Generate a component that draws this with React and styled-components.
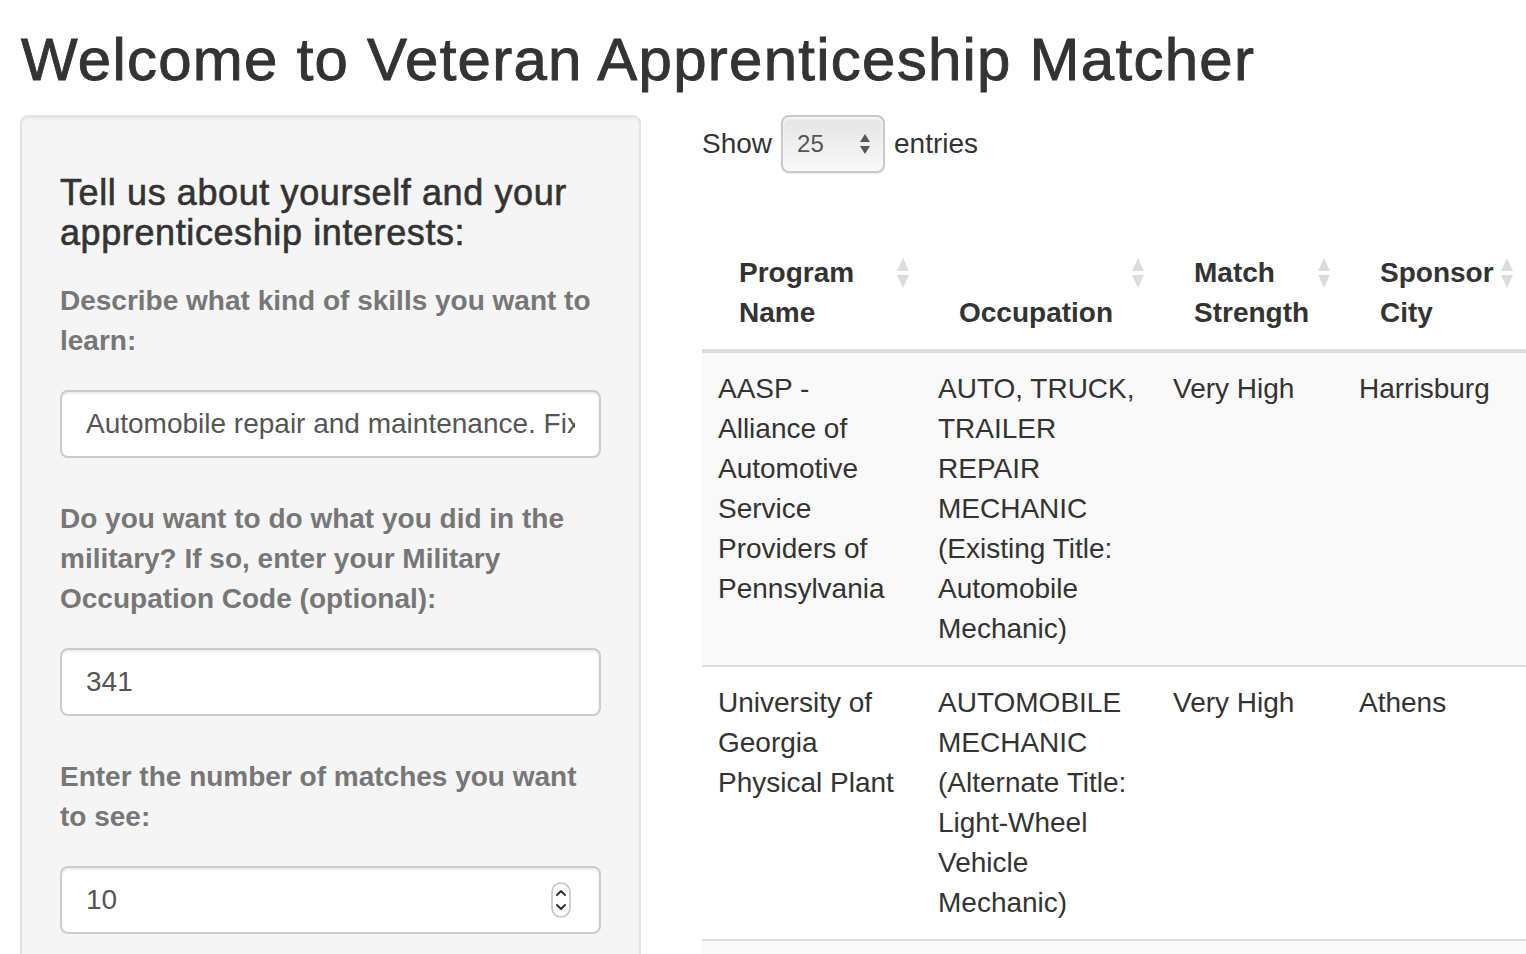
import React from "react";
import styled, { createGlobalStyle } from "styled-components";

const GlobalStyle = createGlobalStyle`
  html, body {
    margin: 0;
    padding: 0;
    background: #fff;
    overflow: hidden;
  }
  body {
    font-family: "Liberation Sans", Arial, Helvetica, sans-serif;
    color: #333;
  }
  * {
    box-sizing: border-box;
  }
`;

const programs = [
  {
    name: "AASP - Alliance of Automotive Service Providers of Pennsylvania",
    occupation: "AUTO, TRUCK, TRAILER REPAIR MECHANIC (Existing Title: Automobile Mechanic)",
    strength: "Very High",
    city: "Harrisburg",
  },
  {
    name: "University of Georgia Physical Plant",
    occupation: "AUTOMOBILE MECHANIC (Alternate Title: Light-Wheel Vehicle Mechanic)",
    strength: "Very High",
    city: "Athens",
  },
];

const columns = [
  { title: "Program Name", width: 220 },
  { title: "Occupation", width: 235 },
  { title: "Match Strength", width: 186 },
  { title: "Sponsor City", width: 183 },
];

function SortIcon() {
  return (
    <SortMark width="14" height="32" viewBox="0 0 14 32">
      <path d="M7 1 L13 14 L1 14 Z" fill="#dcdcdc" />
      <path d="M7 31 L13 18 L1 18 Z" fill="#dcdcdc" />
    </SortMark>
  );
}

function SpinIcon() {
  return (
    <Spinner width="20" height="36" viewBox="0 0 20 36">
      <rect x="1" y="1" width="18" height="34" rx="9" fill="#fff" stroke="#c4c4c4" strokeWidth="1.5" />
      <path d="M6 13 L10 9 L14 13" fill="none" stroke="#333" strokeWidth="2" strokeLinecap="round" strokeLinejoin="round" />
      <path d="M6 23 L10 27 L14 23" fill="none" stroke="#333" strokeWidth="2" strokeLinecap="round" strokeLinejoin="round" />
    </Spinner>
  );
}

export default function App() {
  return (
    <Page>
      <GlobalStyle />
      <Title>Welcome to Veteran Apprenticeship Matcher</Title>
      <Row>
        <Sidebar>
          <Heading>Tell us about yourself and your apprenticeship interests:</Heading>
          <FormGroup>
            <Label>Describe what kind of skills you want to learn:</Label>
            <TextInput
              type="text"
              readOnly
              value="Automobile repair and maintenance. Fixing engines and brakes."
            />
          </FormGroup>
          <FormGroup>
            <Label>Do you want to do what you did in the military? If so, enter your Military Occupation Code (optional):</Label>
            <TextInput type="text" readOnly value="341" />
          </FormGroup>
          <FormGroup>
            <Label>Enter the number of matches you want to see:</Label>
            <NumberWrap>
              <TextInput type="text" readOnly value="10" />
              <SpinIcon />
            </NumberWrap>
          </FormGroup>
        </Sidebar>

        <Main>
          <LengthRow>
            <span>Show</span>
            <Select>
              <span>25</span>
              <svg width="12" height="22" viewBox="0 0 12 22">
                <path d="M6 1 L11 9 L1 9 Z" fill="#555" />
                <path d="M6 21 L11 13 L1 13 Z" fill="#555" />
              </svg>
            </Select>
            <span>entries</span>
          </LengthRow>

          <Table>
            <colgroup>
              {columns.map((c) => (
                <col key={c.title} style={{ width: c.width }} />
              ))}
            </colgroup>
            <thead>
              <tr>
                {columns.map((c) => (
                  <Th key={c.title}>
                    {c.title}
                    <SortIcon />
                  </Th>
                ))}
              </tr>
            </thead>
            <tbody>
              {programs.map((p, i) => (
                <Tr key={p.name} $striped={i % 2 === 0}>
                  <Td>{p.name}</Td>
                  <Td>{p.occupation}</Td>
                  <Td>{p.strength}</Td>
                  <Td>{p.city}</Td>
                </Tr>
              ))}
              <Tr $striped>
                <EmptyTd />
                <EmptyTd />
                <EmptyTd />
                <EmptyTd />
              </Tr>
            </tbody>
          </Table>
        </Main>
      </Row>
    </Page>
  );
}

const Page = styled.div`
  padding: 0 0 0 20px;
  width: 1526px;
  height: 954px;
  overflow: hidden;
`;

const Title = styled.h2`
  margin: 27px 0 22px 1px;
  font-size: 60px;
  line-height: 66px;
  font-weight: 500;
  letter-spacing: 1.25px;
  -webkit-text-stroke: 0.9px #333;
  color: #333;
`;

const Row = styled.div`
  display: flex;
  align-items: flex-start;
  gap: 61px;
`;

const Sidebar = styled.div`
  flex: 0 0 621px;
  min-height: 1000px;
  padding: 38px 38px;
  background: #f5f5f5;
  border: 2px solid #e3e3e3;
  border-radius: 8px;
  box-shadow: inset 0 2px 2px rgba(0, 0, 0, 0.05);
`;

const Heading = styled.h4`
  margin: 18px 0 29px;
  font-size: 36px;
  line-height: 1.1;
  font-weight: 500;
  letter-spacing: 0.6px;
  -webkit-text-stroke: 0.6px #333;
  color: #333;
`;

const FormGroup = styled.div`
  margin-bottom: 41px;
`;

const Label = styled.label`
  display: block;
  margin-bottom: 29px;
  font-size: 28px;
  line-height: 40px;
  font-weight: 700;
  color: #777;
`;

const TextInput = styled.input`
  display: block;
  width: 100%;
  height: 68px;
  padding: 0 24px;
  font-family: inherit;
  font-size: 28px;
  color: #555;
  background: #fff;
  border: 2px solid #ccc;
  border-radius: 8px;
  box-shadow: inset 0 2px 2px rgba(0, 0, 0, 0.075);
  outline: none;
`;

const NumberWrap = styled.div`
  position: relative;
`;

const Spinner = styled.svg`
  position: absolute;
  right: 30px;
  top: 16px;
`;

const Main = styled.div`
  flex: 0 0 824px;
  display: flex;
  flex-direction: column;
`;

const LengthRow = styled.div`
  display: flex;
  align-items: center;
  gap: 9px;
  height: 58px;
  font-size: 28px;
  color: #333;
`;

const Select = styled.div`
  display: flex;
  align-items: center;
  justify-content: space-between;
  width: 104px;
  height: 58px;
  padding: 0 12px 0 14px;
  border: 2px solid #c9c9c9;
  border-radius: 8px;
  background: linear-gradient(#e4e4e4, #f9f9f9);
  box-shadow: inset 0 2px 3px rgba(255, 255, 255, 0.8), 0 1px 1px rgba(0, 0, 0, 0.08);
  font-size: 24px;
  color: #555;
`;

const Table = styled.table`
  margin-top: 64px;
  width: 824px;
  table-layout: fixed;
  border-collapse: collapse;
  font-size: 28px;
  line-height: 40px;
  color: #333;
`;

const Th = styled.th`
  position: relative;
  padding: 16px 60px 16px 37px;
  text-align: left;
  vertical-align: bottom;
  font-weight: 700;
  border-bottom: 4px solid #ddd;
`;

const SortMark = styled.svg`
  position: absolute;
  top: 20px;
  right: 12px;
`;

const Tr = styled.tr`
  background: ${(p) => (p.$striped ? "#f9f9f9" : "#fff")};
`;

const Td = styled.td`
  padding: 16px;
  vertical-align: top;
  border-top: 2px solid #ddd;
`;

const EmptyTd = styled(Td)`
  height: 72px;
`;
